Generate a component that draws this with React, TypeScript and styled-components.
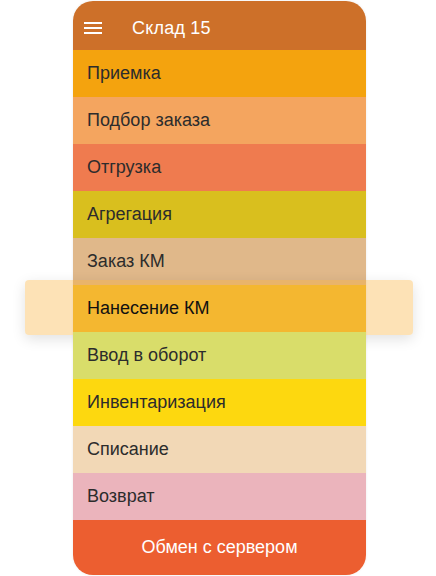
import React from "react";
import styled, { createGlobalStyle } from "styled-components";

const GlobalStyle = createGlobalStyle`
  html, body {
    margin: 0;
    padding: 0;
    background: #ffffff;
  }
  body {
    font-family: "Liberation Sans", Arial, sans-serif;
  }
`;

const Page = styled.div`
  width: 436px;
  height: 576px;
  padding-top: 1px;
  box-sizing: border-box;
`;

const Phone = styled.div`
  width: 293px;
  margin-left: 73px;
  display: flex;
  flex-direction: column;
  border-radius: 20px;
  box-shadow: 0 0 3px rgba(0, 0, 0, 0.08);
`;

const Header = styled.header`
  height: 49px;
  box-sizing: border-box;
  display: flex;
  align-items: center;
  padding: 5px 0 0 11px;
  gap: 30px;
  background: #cd7029;
  border-radius: 20px 20px 0 0;
  color: #ffffff;
`;

const MenuButton = styled.button`
  display: flex;
  padding: 0;
  border: 0;
  background: none;
  color: inherit;
  cursor: pointer;
`;

const Title = styled.h1`
  margin: 0;
  font-size: 18px;
  font-weight: 400;
  letter-spacing: 0.2px;
`;

const Menu = styled.ul`
  list-style: none;
  margin: 0;
  padding: 0;
  display: flex;
  flex-direction: column;
`;

const Item = styled.li<{ $bg: string; $active?: boolean }>`
  position: relative;
  height: 47px;
  display: flex;
  align-items: center;
  padding-left: 14px;
  background: ${(p) => p.$bg};
  font-size: 18px;
  color: ${(p) => (p.$active ? "#111111" : "#2c2c2c")};

  ${(p) =>
    p.$active &&
    `
    &::before {
      content: "";
      position: absolute;
      left: -48px;
      right: -47px;
      top: -5px;
      bottom: -3px;
      border-radius: 4px;
      background: rgba(249, 172, 46, 0.35);
      box-shadow: 0 4px 14px rgba(0, 0, 0, 0.12);
      pointer-events: none;
    }
  `}
`;

const Label = styled.span`
  position: relative;
  z-index: 1;
`;

const SyncButton = styled.button`
  height: 55px;
  border: 0;
  padding: 0;
  background: #ec5e30;
  border-radius: 0 0 20px 20px;
  color: #ffffff;
  font-family: inherit;
  font-size: 18px;
  cursor: pointer;
`;

const items: { title: string; bg: string; active?: boolean }[] = [
  { title: "Приемка", bg: "#f4a30e" },
  { title: "Подбор заказа", bg: "#f4a55f" },
  { title: "Отгрузка", bg: "#ef7b4f" },
  { title: "Агрегация", bg: "#d9bf1e" },
  { title: "Заказ КМ", bg: "#e0b88a" },
  { title: "Нанесение КМ", bg: "#f1bd32", active: true },
  { title: "Ввод в оборот", bg: "#d9dd6a" },
  { title: "Инвентаризация", bg: "#fdd80f" },
  { title: "Списание", bg: "#f2d8b6" },
  { title: "Возврат", bg: "#ebb4bc" },
];

export default function App() {
  return (
    <>
      <GlobalStyle />
      <Page>
        <Phone>
          <Header>
            <MenuButton aria-label="Меню">
              <svg width="18" height="12" viewBox="0 0 18 12">
                <rect x="0" y="0" width="18" height="2" fill="currentColor" />
                <rect x="0" y="5" width="18" height="2" fill="currentColor" />
                <rect x="0" y="10" width="18" height="2" fill="currentColor" />
              </svg>
            </MenuButton>
            <Title>Склад 15</Title>
          </Header>
          <Menu>
            {items.map((it) => (
              <Item key={it.title} $bg={it.bg} $active={it.active}>
                <Label>{it.title}</Label>
              </Item>
            ))}
          </Menu>
          <SyncButton>Обмен с сервером</SyncButton>
        </Phone>
      </Page>
    </>
  );
}
